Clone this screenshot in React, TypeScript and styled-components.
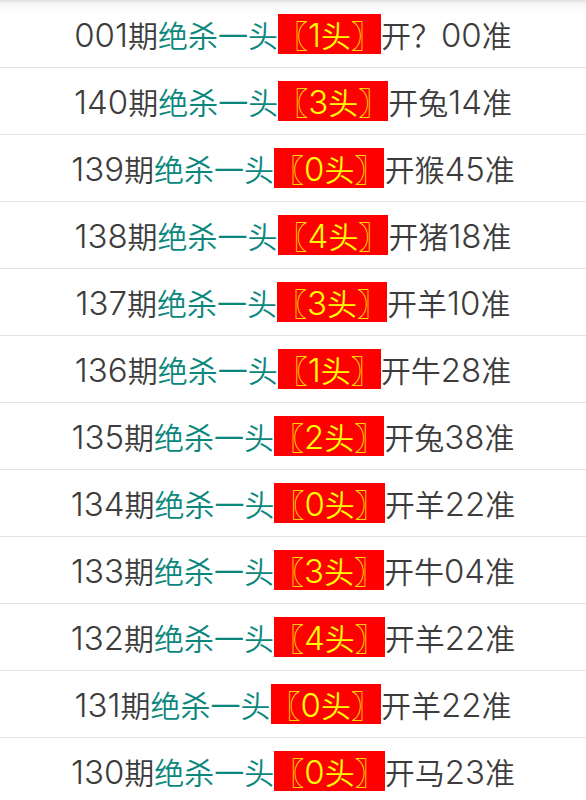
import React from 'react';
import styled, { createGlobalStyle } from 'styled-components';

const GlobalStyle = createGlobalStyle`
  html, body {
    margin: 0;
    padding: 0;
    background: #fff;
  }
  body {
    font-family: 'Noto Sans CJK SC', sans-serif;
  }
`;

const rows = [
  { issue: '001', head: '1', zodiac: '？', num: '00' },
  { issue: '140', head: '3', zodiac: '兔', num: '14' },
  { issue: '139', head: '0', zodiac: '猴', num: '45' },
  { issue: '138', head: '4', zodiac: '猪', num: '18' },
  { issue: '137', head: '3', zodiac: '羊', num: '10' },
  { issue: '136', head: '1', zodiac: '牛', num: '28' },
  { issue: '135', head: '2', zodiac: '兔', num: '38' },
  { issue: '134', head: '0', zodiac: '羊', num: '22' },
  { issue: '133', head: '3', zodiac: '牛', num: '04' },
  { issue: '132', head: '4', zodiac: '羊', num: '22' },
  { issue: '131', head: '0', zodiac: '羊', num: '22' },
  { issue: '130', head: '0', zodiac: '马', num: '23' },
];

const App = () => {
  return (
    <>
      <GlobalStyle />
      <List>
        {rows.map((row) => (
          <Row key={row.issue}>
            <Issue>
              <Num>{row.issue}</Num>期
            </Issue>
            <Tip>绝杀一头</Tip>
            <Head>
              〖<Num>{row.head}</Num>头〗
            </Head>
            <Result>
              开{row.zodiac}
              <Num>{row.num}</Num>准
            </Result>
          </Row>
        ))}
      </List>
    </>
  );
};

export default App;

const List = styled.div`
  width: 100%;
  background: linear-gradient(#e6e6e6 0px, #f7f7f7 3px, #fff 14px);
  border-top: 1px solid #e2e2e2;
`;

const Row = styled.div`
  height: 66px;
  border-bottom: 1px solid #e3e3e3;
  display: flex;
  align-items: center;
  justify-content: center;
  font-size: 30px;
  font-weight: 350;
  line-height: 40px;
  white-space: nowrap;
`;

const Num = styled.span`
  font-family: Inter, 'Noto Sans CJK SC', sans-serif;
  font-size: 33px;
  font-weight: 350;
`;

const Issue = styled.span`
  color: #3c3c3c;
`;

const Tip = styled.span`
  color: #0a877d;
`;

const Head = styled.span`
  display: inline-block;
  background: #ff0000;
  color: #ffff00;
  height: 40px;
  line-height: 40px;
`;

const Result = styled.span`
  color: #3c3c3c;
`;
